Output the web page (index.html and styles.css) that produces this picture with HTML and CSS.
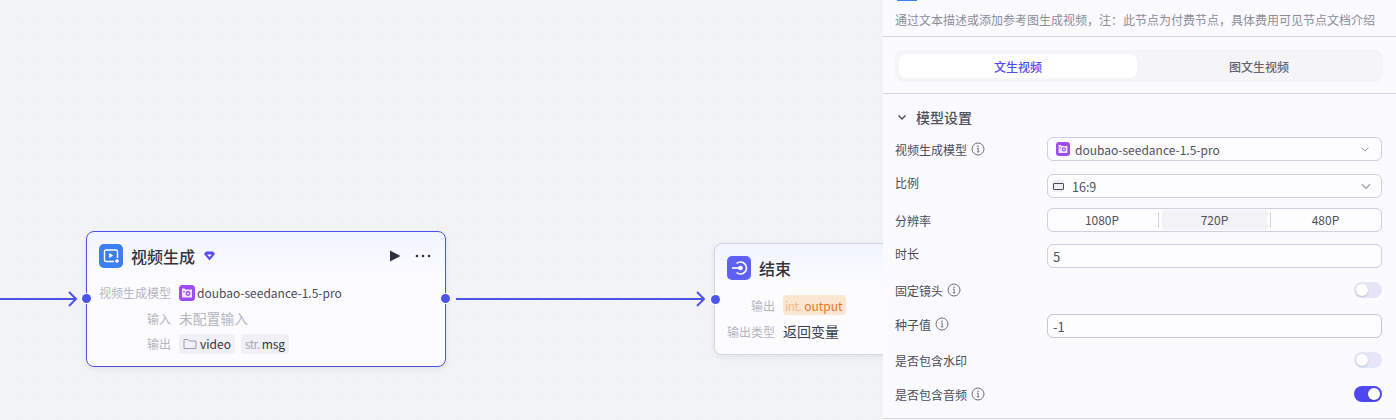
FILE: index.html
```html
<!DOCTYPE html>
<html lang="zh">
<head>
<meta charset="utf-8">
<title>视频生成</title>
<link rel="stylesheet" href="styles.css">
</head>
<body>
<svg class="defs" width="0" height="0">
  <symbol id="info" viewBox="0 0 14 14"><circle cx="7" cy="7" r="6" fill="none" stroke="#6b6d7c" stroke-width="1"/><path d="M6 6.2h1.2v3.6M5.8 9.9h2.6" fill="none" stroke="#6b6d7c" stroke-width="1"/><circle cx="7" cy="4.2" r=".8" fill="#6b6d7c"/></symbol>
  <symbol id="model" viewBox="0 0 16 16"><rect width="16" height="16" rx="3.5" fill="#9d4df2"/><path d="M3 3.500h2.500l.8 1H13v8H3z" fill="#f3e6ff"/><circle cx="9" cy="8.500" r="2.400" fill="#9d4df2"/><circle cx="9" cy="8.500" r="1" fill="#fff"/><rect x="4" y="6" width="1.800" height="1.200" fill="#9d4df2"/></symbol>
  <symbol id="chev" viewBox="0 0 12 12"><path d="M2.500 4.500 6 8l3.500-3.500" fill="none" stroke="currentColor"/></symbol>
</svg>

<main class="canvas">
  <svg class="edges" width="883" height="420">
    <path d="M0 299H76M69 292l7 7-7 7" fill="none" stroke="#4d53e8" stroke-width="2"/>
    <path d="M456 299H704M697 292l7 7-7 7" fill="none" stroke="#4d53e8" stroke-width="2"/>
  </svg>

  <section class="node node-video">
    <span class="port port-in"></span>
    <span class="port port-out"></span>
    <header class="node-head">
      <span class="node-icon icon-blue">
        <svg width="24" height="24" viewBox="0 0 24 24"><path d="M15 17.500H7A1.500 1.500 0 0 1 5.500 16V7.500A1.500 1.500 0 0 1 7 6h10a1.500 1.500 0 0 1 1.500 1.500V14" fill="none" stroke="#fff" stroke-width="1.400"/><path d="M10.200 9v5l4-2.500z" fill="#fff"/><path d="M18 15v4M16 17h4" stroke="#fff" stroke-width="1.400"/></svg>
      </span>
      <h2 class="node-title">视频生成</h2>
      <svg class="gem" width="11" height="10" viewBox="0 0 11 10"><path d="M2 .5h7l2 2.600L5.500 9.500 0 3.100z" fill="#5a4df0"/><path d="M3 3.500h5L5.500 6z" fill="#fff"/></svg>
      <span class="head-actions">
        <svg width="12" height="12" viewBox="0 0 12 12"><path d="M1 .5v11l10.500-5.500z" fill="#2f3142"/></svg>
        <svg width="16" height="4" viewBox="0 0 16 4"><circle cx="2" cy="2" r="1.300" fill="#2f3142"/><circle cx="8" cy="2" r="1.300" fill="#2f3142"/><circle cx="14" cy="2" r="1.300" fill="#2f3142"/></svg>
      </span>
    </header>
    <div class="node-rows">
      <div class="node-row"><span class="node-label">视频生成模型</span><span class="node-val model-val"><svg width="16" height="16"><use href="#model"/></svg>doubao-seedance-1.5-pro</span></div>
      <div class="node-row"><span class="node-label">输入</span><span class="node-val muted">未配置输入</span></div>
      <div class="node-row"><span class="node-label">输出</span>
        <span class="node-val tags">
          <span class="tag"><svg width="14" height="12" viewBox="0 0 14 12"><path d="M1 10.500V1.500h4l1.200 1.500H13v7.500z" fill="none" stroke="#9a9cab" stroke-width="1"/></svg>video</span>
          <span class="tag"><i>str.</i>msg</span>
        </span>
      </div>
    </div>
  </section>

  <section class="node node-end">
    <span class="port port-in"></span>
    <header class="node-head">
      <span class="node-icon icon-violet">
        <svg width="24" height="24" viewBox="0 0 24 24"><path d="M9.500 7.500a6 6 0 1 1 0 9" fill="none" stroke="#fff" stroke-width="1.600"/><path d="M5 12h9" stroke="#fff" stroke-width="1.600"/><circle cx="13.500" cy="12" r="2.300" fill="#fff"/></svg>
      </span>
      <h2 class="node-title">结束</h2>
    </header>
    <div class="node-rows">
      <div class="node-row end-first"><span class="node-label">输出</span><span class="tag tag-orange"><i>int.</i>output</span></div>
      <div class="node-row end-second"><span class="node-label">输出类型</span><span class="node-val">返回变量</span></div>
    </div>
  </section>
</main>

<aside class="panel">
  <span class="panel-sliver"></span>
  <p class="panel-desc">通过文本描述或添加参考图生成视频，注：此节点为付费节点，具体费用可见节点文档介绍</p>
  <div class="tabs-wrap">
    <div class="tabs">
      <button class="tab tab-on">文生视频</button>
      <button class="tab">图文生视频</button>
    </div>
  </div>
  <div class="settings">
    <h3 class="settings-title"><svg width="12" height="12"><use href="#chev"/></svg>模型设置</h3>
    <div class="form">
      <div class="row"><span class="lab">视频生成模型<svg class="i" width="14" height="14"><use href="#info"/></svg></span>
        <div class="ctl select"><svg width="14" height="14"><use href="#model"/></svg><span class="sel-text">doubao-seedance-1.5-pro</span><svg class="chev" width="12" height="12"><use href="#chev"/></svg></div></div>
      <div class="row"><span class="lab lift-l">比例</span>
        <div class="ctl select select-ratio"><span class="ratio"><span class="ratio-in"></span></span><span class="sel-text">16:9</span><svg class="chev" width="14" height="14"><use href="#chev"/></svg></div></div>
      <div class="row"><span class="lab">分辨率</span>
        <div class="ctl seg"><span class="seg-item seg-first">1080P</span><span class="seg-item seg-on">720P</span><span class="seg-item">480P</span></div></div>
      <div class="row"><span class="lab lift-m">时长</span><div class="ctl input">5</div></div>
      <div class="row row-sw"><span class="lab">固定镜头<svg class="i" width="14" height="14"><use href="#info"/></svg></span><span class="switch"></span></div>
      <div class="row"><span class="lab lift-s">种子值<svg class="i" width="14" height="14"><use href="#info"/></svg></span><div class="ctl input input-seed">-1</div></div>
      <div class="row row-sw"><span class="lab">是否包含水印</span><span class="switch"></span></div>
      <div class="row row-sw"><span class="lab">是否包含音频<svg class="i" width="14" height="14"><use href="#info"/></svg></span><span class="switch switch-on"></span></div>
    </div>
  </div>
</aside>
</body>
</html>
```
FILE: styles.css
```css
* { box-sizing: border-box; }
html, body { margin: 0; height: 100%; }
body {
  display: flex;
  width: 1396px;
  height: 420px;
  overflow: hidden;
  font-family: "Noto Sans CJK SC", "Noto Sans", sans-serif;
  font-size: 12px;
  color: #2f3142;
}
.defs { position: absolute; }

/* canvas */
.canvas {
  position: relative;
  flex: 0 0 883px;
  background-color: #f2f3f5;
  background-image: radial-gradient(circle at 17px 17px, #ecedf0 1px, transparent 1.1px);
  background-size: 20px 20px;
  overflow: hidden;
}
.edges { position: absolute; left: 0; top: 0; }
.node {
  position: absolute;
  border-radius: 8px;
  background: linear-gradient(180deg, #f1f5ff 0, #fcfcff 45px, #fcfcff 100%);
  box-shadow: 0 2px 6px rgba(30, 34, 70, .07);
}
.node-video { left: 86px; top: 231px; width: 360px; height: 136px; border: 1px solid #4d53e8; padding: 12px 12px 0; }
.node-end { left: 714px; top: 243px; width: 220px; height: 112px; border: 1px solid #d3d5e2; padding: 12px 12px 0; }
.port {
  position: absolute;
  top: 62px;
  width: 9px;
  height: 9px;
  border-radius: 50%;
  background: #4d53e8;
  box-shadow: 0 0 0 1px #fff;
}
.node-video .port-in { left: -5px; }
.node-video .port-out { right: -5px; }
.node-end .port-in { left: -4px; top: 51px; }
.node-head { display: flex; align-items: center; height: 24px; }
.node-icon { display: flex; width: 24px; height: 24px; border-radius: 5px; flex: none; }
.icon-blue { background: #3d7ef0; }
.icon-violet { background: #5f60f5; }
.node-title { margin: 0 0 0 8px; font-size: 16px; font-weight: 500; line-height: 24px; color: #33343f; }
.gem { margin-left: 9px; }
.head-actions { display: flex; align-items: center; gap: 14px; margin-left: auto; padding-right: 2px; }
.node-rows { display: flex; flex-direction: column; margin-top: 12px; }
.node-row { display: flex; align-items: center; height: 25px; }
.node-video .node-row:nth-child(2) { height: 26px; }
.node-video .node-label { width: 72px; }
.node-end .node-label { width: 48px; }
.node-label { flex: none; margin-right: 8px; text-align: right; font-size: 12px; color: #b4b6c2; white-space: nowrap; }
.node-val { display: flex; align-items: center; font-size: 14px; color: #3a3b48; white-space: nowrap; }
.model-val { font-size: 12px; gap: 2px; color: #4a4b58; }
.muted { font-size: 13.800px; color: #b4b6c2; }
.tags { gap: 6px; }
.tag {
  display: inline-flex;
  align-items: center;
  gap: 2px;
  height: 20px;
  padding: 0 4px;
  border-radius: 4px;
  background: #f0f0f6;
  font-size: 12px;
  color: #33343f;
}
.tag svg { margin-right: 1px; }
.tag i { font-style: normal; font-size: 12px; color: #a9abb8; letter-spacing: -.6px; }
.tag-orange { padding: 0 3px 0 2px; gap: 3px; background: #fbe6d2; color: #f5741a; }
.tag-orange i { color: #f5bb8c; }
.end-first { height: 26px; }
.end-second { height: 26px; }

/* side panel */
.panel {
  flex: 1;
  display: flex;
  flex-direction: column;
  background: #fbfbff;
  min-width: 0;
}
.panel-sliver { display: block; width: 20px; height: 1px; margin-left: 14px; background: #3d7ef0; }
.panel-desc {
  height: 36px;
  margin: 0;
  padding: 10px 12px 0;
  border-bottom: 1px solid #d4d5e3;
  line-height: 18px;
  color: #8a8c99;
  white-space: nowrap;
}
.tabs-wrap { height: 57px; padding: 13px 13px 0 12px; border-bottom: 1px solid #d4d5e3; }
.tabs { display: flex; height: 32px; padding: 4px; border-radius: 8px; background: #f5f5f7; }
.tab {
  flex: 1;
  padding: 0 0 0 2px;
  border: 0;
  border-radius: 7px;
  background: transparent;
  font: 500 12px "Noto Sans CJK SC", sans-serif;
  color: #62636f;
}
.tab-on { flex: 0 0 238px; padding: 0; background: #fff; color: #5147f0; }
.settings { height: 325px; padding: 0 14px 0 12px; border-bottom: 1px solid #d4d5e3; }
.settings-title {
  display: flex;
  align-items: center;
  gap: 8px;
  height: 43px;
  margin: 0;
  padding: 3px 0 0 1px;
  font-size: 14px;
  font-weight: 500;
  color: #50515e;
}
.settings-title svg { color: #50515e; stroke-width: 1.500; }
.form { display: grid; grid-template-rows: 37px 34px 36px 38px 32px 38px 34px 32px; }
.row { display: flex; align-items: flex-start; justify-content: space-between; }
.row-sw { align-items: center; height: 16px; }
.lab { display: flex; align-items: center; gap: 4px; height: 24px; color: #4a4b58; white-space: nowrap; }
.row-sw .lab { height: 16px; }
.lift-l { margin-top: -4px; }
.lift-m { margin-top: -3px; }
.lift-s { margin-top: -2px; }
.ctl {
  display: flex;
  align-items: center;
  width: 335px;
  height: 24px;
  border: 1px solid #ced0e0;
  border-radius: 6px;
  background: #fdfdff;
  color: #50515e;
}
.select { padding: 0 10px 0 8px; }
.sel-text { margin-left: 5px; font-size: 12px; }
.select-ratio { padding: 0 8px 0 4px; }
.select-ratio .sel-text { margin-left: 8px; font-size: 12.500px; }
.chev { margin-left: auto; color: #9a9cab; stroke-width: 1; }
.ratio { display: flex; align-items: center; justify-content: center; width: 12px; height: 12px; border-radius: 2px; background: #eeeef3; }
.ratio-in { display: block; width: 11px; height: 7px; border: 1px solid #4a4b58; border-radius: 1px; }
.seg { padding: 1px; }
.seg-item {
  position: relative;
  flex: 1;
  height: 20px;
  text-align: center;
  line-height: 20px;
}
.seg-first { flex: 0 0 110px; padding-right: 4px; }
.seg-item + .seg-item::before {
  content: "";
  position: absolute;
  left: -1px;
  top: 2px;
  height: 16px;
  border-left: 1px solid #d4d5e3;
}
.seg-on { flex: 0 0 112px; padding: 0 4px 0 3px; background: #f2f2f7; background-clip: content-box; border-radius: 5px; }
.input { padding: 0 5px; font-size: 13px; }
.input-seed { border-color: #c3c5dc; }
.switch {
  position: relative;
  width: 28px;
  height: 16px;
  border-radius: 8px;
  background: #e4e6f8;
}
.switch::after {
  content: "";
  position: absolute;
  left: 2px;
  top: 2px;
  width: 12px;
  height: 12px;
  border-radius: 50%;
  background: #fff;
  box-shadow: 0 1px 2px rgba(30, 34, 70, .2);
}
.switch-on { background: #4f48f2; }
.switch-on::after { left: 14px; }
```
